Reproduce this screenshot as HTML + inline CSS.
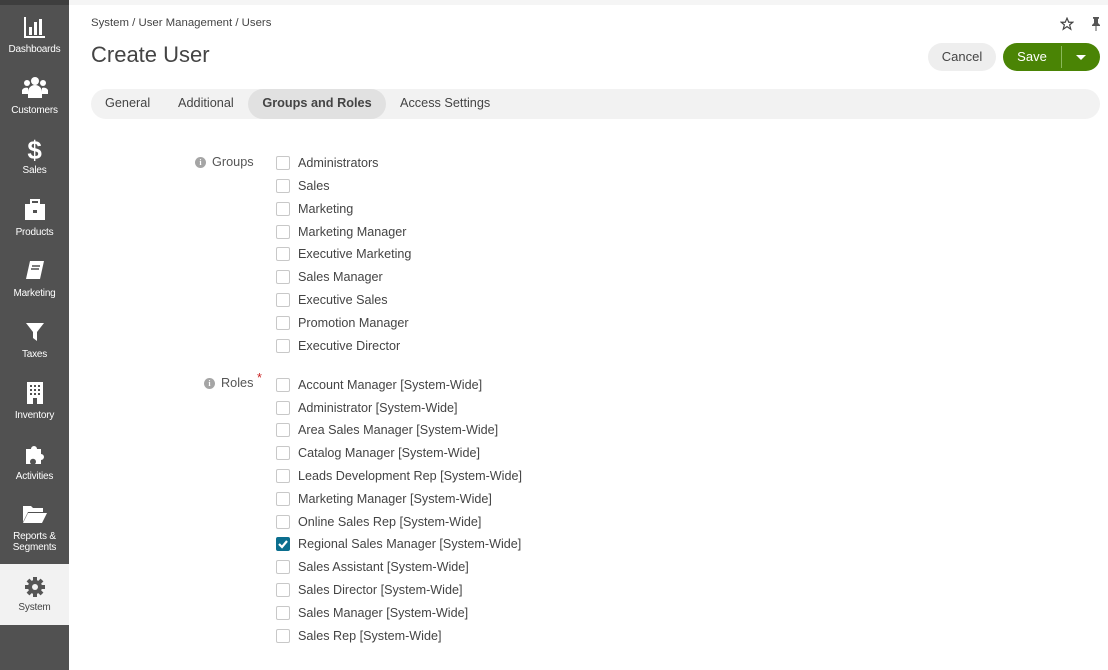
<!DOCTYPE html>
<html><head><meta charset="utf-8"><style>
*{margin:0;padding:0;box-sizing:border-box}
body{width:1108px;height:670px;overflow:hidden;font-family:"Liberation Sans",Arial,sans-serif;background:#fff;position:relative;color:#333}
.side{position:absolute;left:0;top:0;width:69px;height:670px;background:#515151}
.side .top{height:5px;background:#3e3e3e}
.it{position:absolute;left:0;width:69px;height:61px;text-align:center;color:#fff;font-size:10px;line-height:11px;letter-spacing:-0.2px}
.it svg{display:block;margin:0 auto}
.topbar{position:absolute;left:69px;top:0;right:0;height:5px;background:#f5f5f5}
.crumb{position:absolute;left:91px;top:17px;font-size:11.4px;color:#444}
h1{position:absolute;left:91px;top:42px;font-size:22px;font-weight:normal;color:#444}
.btn{position:absolute;top:43px;height:28px;border-radius:14px;font-size:13px;line-height:28px;text-align:center}
.tabs{position:absolute;left:91px;top:89px;width:1009px;height:30px;background:#f2f2f2;border-radius:15px}
.tab{position:absolute;top:0;height:30px;line-height:29px;font-size:12.7px;color:#444;border-radius:15px}
.lbl{position:absolute;font-size:12.7px;color:#555}
.info{display:inline-block;width:11px;height:11px;border-radius:50%;background:#a5a5a5;color:#fff;font-size:8px;line-height:11px;text-align:center;font-weight:bold;font-family:"Liberation Serif",serif;vertical-align:1px;margin-right:6px}
.row{position:absolute;left:276px;height:20px;font-size:12.6px;color:#444;line-height:16px}
.cb{position:absolute;left:0;top:1px;width:14px;height:14px;border:1px solid #c8c8c8;border-radius:2px;background:#fff}
.row span{position:absolute;left:22px;top:0;white-space:nowrap}
</style></head><body>
<div class="side"><div class="top"></div>
<div class="it" style="top:15px"><svg width="24" height="24" viewBox="0 0 24 24"><path d="M2 2v20h20" stroke="#fff" stroke-width="2" fill="none"/><rect x="6" y="12" width="3" height="8" fill="#fff"/><rect x="11" y="7" width="3" height="13" fill="#fff"/><rect x="16" y="4" width="3" height="16" fill="#fff"/></svg><div style="margin-top:5px">Dashboards</div></div>
<div class="it" style="top:76px"><svg width="26" height="24" viewBox="0 0 26 24"><circle cx="13" cy="5" r="4" fill="#fff"/><circle cx="5" cy="7" r="3" fill="#fff"/><circle cx="21" cy="7" r="3" fill="#fff"/><path d="M6 22v-6a7 7 0 0 1 14 0v6z M0 18v-4a5 5 0 0 1 6-2v6z M26 18v-4a5 5 0 0 0-6-2v6z" fill="#fff"/></svg><div style="margin-top:5px">Customers</div></div>
<div class="it" style="top:137px"><div style="font-size:26px;font-weight:bold;line-height:26px">$</div><div style="margin-top:2px">Sales</div></div>
<div class="it" style="top:198px"><svg width="24" height="24" viewBox="0 0 24 24"><rect x="8" y="2" width="8" height="4" fill="none" stroke="#fff" stroke-width="2"/><rect x="2" y="6" width="20" height="16" fill="#fff"/><rect x="10" y="12" width="4" height="3" fill="#515151"/></svg><div style="margin-top:5px">Products</div></div>
<div class="it" style="top:259px"><svg width="24" height="24" viewBox="0 0 24 24"><path d="M7 2h14l-4 18H3z" fill="#fff"/><path d="M9 7h8M8 10h8" stroke="#515151" stroke-width="1.5"/></svg><div style="margin-top:5px">Marketing</div></div>
<div class="it" style="top:320px"><svg width="24" height="24" viewBox="0 0 24 24"><path d="M3 3h18l-7 9v9l-4-3v-6z" fill="#fff"/></svg><div style="margin-top:5px">Taxes</div></div>
<div class="it" style="top:381px"><svg width="24" height="24" viewBox="0 0 24 24"><rect x="4" y="1" width="16" height="22" fill="#fff"/><g fill="#515151"><rect x="7" y="4" width="2" height="2"/><rect x="11" y="4" width="2" height="2"/><rect x="15" y="4" width="2" height="2"/><rect x="7" y="8" width="2" height="2"/><rect x="11" y="8" width="2" height="2"/><rect x="15" y="8" width="2" height="2"/><rect x="7" y="12" width="2" height="2"/><rect x="11" y="12" width="2" height="2"/><rect x="15" y="12" width="2" height="2"/><rect x="10" y="17" width="4" height="6"/></g></svg><div style="margin-top:5px">Inventory</div></div>
<div class="it" style="top:442px"><svg width="24" height="24" viewBox="0 0 24 24"><path d="M3 7h5a3 3 0 1 1 6 0h4v5a3 3 0 1 1 0 6v4H12a3 3 0 1 0-4 0H3z" fill="#fff"/></svg><div style="margin-top:5px">Activities</div></div>
<div class="it" style="top:503px"><svg width="26" height="22" viewBox="0 0 26 22"><path d="M1 3h8l2 2h10v4H6L1 19z" fill="#fff"/><path d="M6 10h19l-5 10H1z" fill="#fff"/></svg><div style="margin-top:6px">Reports &amp;<br>Segments</div></div>
<div class="it" style="top:564px;background:#f2f2f2;color:#444;padding-top:12px"><svg width="22" height="22" viewBox="0 0 22 22"><circle cx="11" cy="11" r="7" fill="#555"/><g stroke="#555" stroke-width="4"><path d="M11 1v20M1 11h20M4 4l14 14M18 4L4 18"/></g><circle cx="11" cy="11" r="3" fill="#f2f2f2"/></svg><div style="margin-top:4px">System</div></div>
</div>
<div class="topbar"></div>
<div class="crumb">System / User Management / Users</div>
<h1>Create User</h1>
<svg style="position:absolute;left:1060px;top:17px" width="14" height="14" viewBox="0 0 24 24"><path d="M12 2l3 7h7l-5.5 4.5 2 7.5-6.5-4.5-6.5 4.5 2-7.5L2 9h7z" fill="none" stroke="#444" stroke-width="2"/></svg>
<svg style="position:absolute;left:1091px;top:17px" width="10" height="14" viewBox="0 0 10 14"><path d="M2 0h6v1.5l-1 .5v4l2 2v1H1V8l2-2V2L2 1.5zM4.5 9h1v5h-1z" fill="#555"/></svg>
<div class="btn" style="left:928px;width:68px;background:#eee;color:#444">Cancel</div>
<div class="btn" style="left:1003px;width:97px;background:#4a8405;color:#fff;text-align:left"><span style="position:absolute;left:0;width:58px;text-align:center">Save</span><span style="position:absolute;left:58px;top:3px;width:1px;height:22px;background:#8ab85a"></span><span style="position:absolute;left:73px;top:12px;border:5px solid transparent;border-top:5px solid #fff;border-bottom:0"></span></div>
<div class="tabs">
<div class="tab" style="left:14px">General</div>
<div class="tab" style="left:87px">Additional</div>
<div class="tab" style="left:157px;width:138px;background:#e1e1e1;text-align:center;font-weight:bold;color:#444">Groups and Roles</div>
<div class="tab" style="left:309px">Access Settings</div>
</div>
<div class="lbl" style="left:195px;top:155px"><span class="info">i</span>Groups</div>
<div class="lbl" style="left:204px;top:376px"><span class="info">i</span>Roles <span style="color:#c81e1e;position:relative;top:-5px">*</span></div>
<div class="row" style="top:155px"><div class="cb"></div><span>Administrators</span></div>
<div class="row" style="top:178px"><div class="cb"></div><span>Sales</span></div>
<div class="row" style="top:201px"><div class="cb"></div><span>Marketing</span></div>
<div class="row" style="top:224px"><div class="cb"></div><span>Marketing Manager</span></div>
<div class="row" style="top:246px"><div class="cb"></div><span>Executive Marketing</span></div>
<div class="row" style="top:269px"><div class="cb"></div><span>Sales Manager</span></div>
<div class="row" style="top:292px"><div class="cb"></div><span>Executive Sales</span></div>
<div class="row" style="top:315px"><div class="cb"></div><span>Promotion Manager</span></div>
<div class="row" style="top:338px"><div class="cb"></div><span>Executive Director</span></div>
<div class="row" style="top:377px"><div class="cb"></div><span>Account Manager [System-Wide]</span></div>
<div class="row" style="top:400px"><div class="cb"></div><span>Administrator [System-Wide]</span></div>
<div class="row" style="top:422px"><div class="cb"></div><span>Area Sales Manager [System-Wide]</span></div>
<div class="row" style="top:445px"><div class="cb"></div><span>Catalog Manager [System-Wide]</span></div>
<div class="row" style="top:468px"><div class="cb"></div><span>Leads Development Rep [System-Wide]</span></div>
<div class="row" style="top:491px"><div class="cb"></div><span>Marketing Manager [System-Wide]</span></div>
<div class="row" style="top:514px"><div class="cb"></div><span>Online Sales Rep [System-Wide]</span></div>
<div class="row" style="top:536px"><div class="cb" style="background:#0b6e8e;border-color:#0b6e8e"><svg width="12" height="12" viewBox="0 0 12 12" style="position:absolute;left:0;top:0"><path d="M2 6l3 3 5-6" stroke="#fff" stroke-width="2.2" fill="none"/></svg></div><span>Regional Sales Manager [System-Wide]</span></div>
<div class="row" style="top:559px"><div class="cb"></div><span>Sales Assistant [System-Wide]</span></div>
<div class="row" style="top:582px"><div class="cb"></div><span>Sales Director [System-Wide]</span></div>
<div class="row" style="top:605px"><div class="cb"></div><span>Sales Manager [System-Wide]</span></div>
<div class="row" style="top:628px"><div class="cb"></div><span>Sales Rep [System-Wide]</span></div>
</body></html>
